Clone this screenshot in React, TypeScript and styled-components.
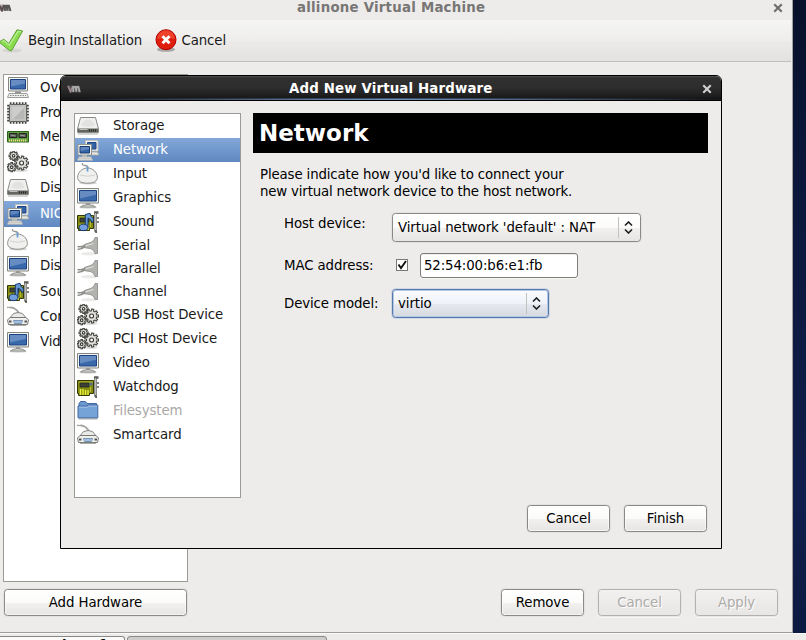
import React from 'react';
import styled, { createGlobalStyle, css } from 'styled-components';

const GlobalStyle = createGlobalStyle`
  * { box-sizing: border-box; }
  html, body { margin: 0; padding: 0; overflow: hidden; }
  body {
    background: #edeceb;
    color: #1a1a1a;
    font-family: 'DejaVu Sans', sans-serif;
    font-size: 13.33px;
    letter-spacing: -0.11px;
    cursor: default;
  }
`;

const Screen = styled.div`
  position: relative;
  width: 806px;
  height: 640px;
  overflow: hidden;
  display: flex;
  flex-direction: column;
  background: #edeceb;
`;

const Desktop = styled.div`
  height: 633px;
  flex: none;
  display: flex;
  background: linear-gradient(#081129 0, #0a1536 110px, #101e4c 500px, #0c1a42 633px);
`;

const MainWindow = styled.div`
  width: 793px;
  height: 633px;
  display: flex;
  flex-direction: column;
  background: #edeceb;
  border-right: 1px solid #a3a2a0;
  border-bottom: 1px solid #9d9c9a;
`;

const MainTitle = styled.div`
  height: 20px;
  flex: none;
  display: flex;
  align-items: center;
  padding: 0 9px 4px 0;
  color: #777674;
  font-weight: bold;
`;

const TitleText = styled.span<{ $left: number; $spacing: string }>`
  margin-left: ${p => p.$left}px;
  flex: 1;
  white-space: nowrap;
  line-height: 16px;
  letter-spacing: ${p => p.$spacing};
`;

const Toolbar = styled.div`
  height: 42px;
  width: 791px;
  flex: none;
  display: flex;
  align-items: center;
  background: linear-gradient(#f5f5f3 0, #eeedec 21px, #ebeae9 22px, #e3e2e0 41px);
  border-bottom: 1px solid #c0bfbd;
`;

const ToolItem = styled.div<{ $gap: number }>`
  display: flex;
  align-items: center;
  gap: ${p => p.$gap}px;
  margin-right: 12.5px;
  white-space: nowrap;
  svg { flex: none; }
`;

const MainBody = styled.div`
  flex: 1;
  padding: 12px 14px 0 3px;
  display: flex;
  flex-direction: column;
`;

const ListBox = styled.div<{ $w: number; $h: number }>`
  width: ${p => p.$w}px;
  height: ${p => p.$h}px;
  flex: none;
  border: 1px solid #9c9a97;
  background: #fff;
  overflow: hidden;
`;

const Row = styled.div<{ $h: number; $indent: number; $selected?: boolean; $dim?: boolean }>`
  height: ${p => p.$h}px;
  padding-left: ${p => p.$indent}px;
  display: flex;
  align-items: center;
  gap: ${p => (p.$indent === 3 ? 11 : 14)}px;
  white-space: nowrap;
  color: ${p => (p.$dim ? '#aaa8a5' : '#1a1a1a')};
  ${p =>
    p.$selected &&
    css`
      color: #fff;
      background: linear-gradient(#83a7d9, #6089c1);
    `}
  svg { flex: none; }
`;

const RowLabel = styled.span`
  line-height: 16px;
`;

const ActionBar = styled.div`
  display: flex;
  margin: 7px 0 0 1px;
  gap: 14px;
`;

const Spacer = styled.div`
  flex: 1;
`;

const Button = styled.button<{ $w?: number }>`
  width: ${p => p.$w ?? 83}px;
  height: 27px;
  padding: 0 0 1px;
  font: inherit;
  letter-spacing: -0.08px;
  color: #000;
  border: 1px solid #8b8986;
  border-radius: 3.5px;
  background: linear-gradient(#fff 0, #fbfbfa 50%, #f2f1f0 52%, #e6e5e3 100%);
  box-shadow: 0 0 0 1px #e3e2e0, inset 0 0 0 1px rgba(255, 255, 255, 0.6);
  &:disabled {
    color: #adaba8;
    text-shadow: 1px 1px #fff;
    border-color: #b3b1ae;
    background: linear-gradient(#f2f1f0, #e7e6e4);
    box-shadow: 0 0 0 1px #e8e7e5, 0 1px 0 1px #f6f6f5;
  }
`;

const Taskbar = styled.div`
  height: 7px;
  display: flex;
  gap: 2px;
  padding-top: 2px;
  border-top: 1px solid #fbfbfa;
`;

const TaskButton = styled.div<{ $w: number; $active?: boolean }>`
  width: ${p => p.$w}px;
  height: 30px;
  padding: 1px 0 0 62px;
  border: 1px solid #8b8986;
  border-left-width: ${p => (p.$active ? 1 : 0)}px;
  border-radius: ${p => (p.$active ? '3px 3px 0 0' : '0 3px 0 0')};
  background: ${p => (p.$active ? '#cfcdcb' : '#fafaf9')};
  color: #000;
  font-weight: bold;
  line-height: 16px;
  white-space: nowrap;
`;

const Dialog = styled.div`
  position: absolute;
  left: 60px;
  top: 75px;
  width: 662px;
  height: 474px;
  border: 1px solid #000;
  border-radius: 6px 6px 0 0;
  background: #edeceb;
  overflow: hidden;
  display: flex;
  flex-direction: column;
`;

const DialogTitle = styled.div`
  height: 25px;
  flex: none;
  display: flex;
  align-items: center;
  padding: 2px 9px 0 6px;
  color: #fff;
  font-weight: bold;
  border-bottom: 1px solid #000;
  background:
    linear-gradient(90deg, #191919 0, #7593be 50%, #191919 100%) 0 23px / 100% 1px no-repeat,
    linear-gradient(90deg, #101317 0, #3f5471 50%, #101317 100%) 0 22px / 100% 1px no-repeat,
    linear-gradient(#5b5b5b 0, #373737 1px, #303030 3px, #2d2d2d 12px, #191919 22px, #111 24px);
`;

const DialogBody = styled.div`
  flex: 1;
  display: flex;
  gap: 12px;
  padding: 12px 13px 0;
`;

const Panel = styled.div`
  width: 455px;
  display: flex;
  flex-direction: column;
`;

const Heading = styled.h1`
  margin: 0;
  height: 40px;
  padding: 0 0 0 6px;
  line-height: 41px;
  background: #000;
  color: #fff;
  font-size: 23px;
  font-weight: bold;
  letter-spacing: 0;
`;

const Hint = styled.p`
  margin: 13px 0 0 7px;
  line-height: 17px;
  color: #000;
  white-space: pre;
`;

const HintLine = styled.span<{ $spacing: string }>`
  display: block;
  letter-spacing: ${p => p.$spacing};
`;

const Form = styled.div`
  margin: 13px 0 0 31px;
  display: grid;
  grid-template-columns: 108px auto;
  grid-template-rows: 29px 47px 29px;
  align-items: center;
  justify-items: start;
  color: #000;
`;

const FieldLabel = styled.label<{ $raise?: number }>`
  line-height: 16px;
  padding-bottom: ${p => p.$raise ?? 0}px;
`;

const Combo = styled.div<{ $w: number; $focus?: boolean }>`
  width: ${p => p.$w}px;
  height: 29px;
  display: flex;
  align-items: center;
  padding: 0 6px 1px 5px;
  border: 1px solid ${p => (p.$focus ? '#5679ab' : '#8b8986')};
  border-radius: 3.5px;
  background: ${p =>
    p.$focus
      ? 'linear-gradient(#fafcfe 0, #eff2f8 50%, #e5e9ef 52%, #d6dae0 100%)'
      : 'linear-gradient(#fff 0, #fbfbfa 50%, #f2f1f0 52%, #e6e5e3 100%)'};
  box-shadow: ${p =>
    p.$focus ? '0 0 0 1px #d0d8e4, inset 0 0 0 1px #b4c8e6' : '0 0 0 1px #e3e2e0'};
`;

const ComboValue = styled.span`
  flex: 1;
  white-space: nowrap;
  letter-spacing: -0.08px;
`;

const ComboArrow = styled.span`
  width: 16px;
  height: 21px;
  display: flex;
  align-items: center;
  justify-content: flex-end;
  padding-right: 1px;
  border-left: 1px solid #c2c0bd;
  margin-top: 1px;
`;

const MacField = styled.div`
  display: flex;
  align-items: center;
  gap: 12px;
  padding-left: 4px;
`;

const Check = styled.span`
  width: 12px;
  height: 12px;
  display: flex;
  border: 1px solid #7b7976;
  background: #fff;
  margin-bottom: 1px;
  svg { overflow: visible; }
`;

const Entry = styled.div`
  width: 158px;
  height: 25px;
  padding: 0 3px 1px;
  display: flex;
  align-items: center;
  border: 1px solid #7e7c79;
  border-radius: 3px;
  background: #fff;
  box-shadow: inset 0 1px #eeedec, 0 1px #f7f7f6;
`;

const DialogActions = styled.div`
  display: flex;
  justify-content: flex-end;
  gap: 14px;
  margin: auto 1px 16px 0;
`;

const CloseIcon = ({ color }: { color: string }) => (
  <svg width="10" height="10" viewBox="0 0 10 10">
    <path d="M2 2l6 6M8 2l-6 6" stroke={color} strokeWidth="2.1" strokeLinecap="square" />
  </svg>
);

const VmMark = ({ dark }: { dark?: boolean }) => (
  <svg width="14" height="8" viewBox="0 0 14 8">
    <path d={dark ? 'M.5 .5h12l1.500 7H3z' : 'M0 .5h9.500l2 6.500H0z'} fill={dark ? '#4d4a4b' : '#a5a2a1'} />
    <path d={dark ? 'M1 1l2.500 5.500L6 1' : 'M0 2l2 4.500L4 1'} fill="none" stroke={dark ? '#9a868c' : '#58474d'} strokeWidth="1.8" />
    <path d={dark ? 'M6.200 7V2h2l1.200 4.500V2h2L12.700 7' : 'M5 7V2h1.500l1 4.500V2h1.500l1.500 5'} fill="none" stroke={dark ? '#a8a8a8' : '#555'} strokeWidth="1.8" />
  </svg>
);

const ArrowsIcon = () => (
  <svg width="9" height="13" viewBox="0 0 9 13">
    <path d="M1 4.500L4.500 1 8 4.500M1 8.500L4.500 12 8 8.500" fill="none" stroke="#1d1d1d" strokeWidth="1.600" />
  </svg>
);

const CheckIcon = () => (
  <svg width="24" height="26" viewBox="0 0 24 26">
    <ellipse cx="12" cy="22.500" rx="10" ry="2" fill="#d6d5d3" />
    <path d="M-1 14l4.800-2.700 5 4.200L17 1.800l5.600 1.200L11.500 22.800 9.500 22.500z" fill="#8adb50" stroke="#5aa332" strokeLinejoin="round" />
    <path d="M1.800 13.500l2-.9 5.300 4.600L18.200 3.500l2.800.4" fill="none" stroke="#bdf094" strokeWidth="1.200" />
  </svg>
);

const StopIcon = () => (
  <svg width="22" height="23" viewBox="0 0 22 23">
    <ellipse cx="11" cy="20.500" rx="9" ry="2.300" fill="#aaa8a6" />
    <circle cx="11" cy="10.700" r="10" fill="#df1e0c" stroke="#b00000" />
    <path d="M2.300 10a8.700 8.700 0 0 1 17.400 0q-8-3-17.400 0z" fill="#f4513c" opacity=".7" />
    <path d="M7.500 7.200l7 7M14.500 7.200l-7 7" stroke="#fff" strokeWidth="3" />
  </svg>
);

type Kind =
  | 'computer' | 'cpu' | 'memory' | 'gears' | 'disk' | 'network' | 'mouse'
  | 'display' | 'sound' | 'plug' | 'card' | 'folder' | 'reader';

// Outline of a toothed wheel: each tooth adds two outer and two inner points.
const gearPoints = (x: number, y: number, r: number, teeth: number) => {
  const step = (2 * Math.PI) / teeth;
  const offsets: [number, number][] = [[-0.3, r * 0.74], [-0.22, r], [0.22, r], [0.3, r * 0.74]];
  return Array.from({ length: teeth }, (_, i) =>
    offsets
      .map(([o, d]) => {
        const a = step * (i + o);
        return `${(x + d * Math.cos(a)).toFixed(2)},${(y + d * Math.sin(a)).toFixed(2)}`;
      })
      .join(' '),
  ).join(' ');
};

const Gear = ({ x, y, r, teeth }: { x: number; y: number; r: number; teeth: number }) => (
  <g>
    <polygon points={gearPoints(x, y, r, teeth)} fill="#e2e1de" stroke="#454743" strokeWidth="1.100" />
    <circle cx={x} cy={y} r={r * 0.28} fill="#fff" stroke="#333532" strokeWidth="1.100" />
  </g>
);

const Board = () => (
  <g>
    <path d="M.5 4.500h16v13h-4v2H1.500v-2h-1z" fill="#848c12" stroke="#343806" />
    <path d="M3.500 13v6M6 13v6M8.500 14v5M11 14v5" stroke="#e8f03a" strokeWidth="1.400" />
    <path d="M2 6h14M13.500 11v5" stroke="#b4bc2a" />
    <path d="M3 7h9v4H3z" fill="#3b4038" stroke="#20241e" strokeWidth=".7" />
    <path d="M12.500 6.800h3v2.500h-3z" fill="#526d91" />
    <path d="M17 1.500h4.500M18.500 1.500v18q0 1.500 1.500 1.500" fill="none" stroke="#5c5e5a" strokeWidth="2.400" />
    <path d="M18.400 2v17" stroke="#d0d1ce" strokeWidth=".9" />
    <path d="M20 7h2M20 11h2" stroke="#595b57" strokeWidth="1.600" />
  </g>
);

const Monitor = () => (
  <g>
    <path d="M.5 1.500h21v14.500H.5z" fill="#f4f4f2" stroke="#82847f" />
    <path d="M2.500 3.500h17v10.500h-17z" fill="#3a69ab" stroke="#1c4380" />
    <path d="M3 4h16v3.800L3 11.500z" fill="#8baad4" opacity=".55" />
  </g>
);

const DeviceIcon = ({ kind }: { kind: Kind }) => (
  <svg width="22" height="22" viewBox="0 0 22 22">
    {kind === 'computer' && (
      <g>
        <path d="M1.500.5h19v13.500h-19z" fill="#f4f4f2" stroke="#82847f" />
        <path d="M3.500 2.500h15v9.500h-15z" fill="#3a69ab" stroke="#1c4380" />
        <path d="M4 3h14v3.500L4 9.500z" fill="#8baad4" opacity=".55" />
        <path d="M8 14.500h6v2H8z" fill="#8e908b" />
        <path d="M2 16.500h18l1.500 4H.5z" fill="#eeeeec" stroke="#9a9c97" />
        <path d="M3 18.500h16" stroke="#888a85" strokeDasharray="1.500 1" />
      </g>
    )}
    {kind === 'display' && (
      <g>
        <ellipse cx="11" cy="20.500" rx="9" ry="1.500" fill="#e2e2e0" />
        <path d="M9 16h4v2H9z" fill="#b1b3ae" />
        <path d="M3.500 20q2-2.300 7.500-2.300t7.500 2.300z" fill="#e6e6e4" stroke="#82847f" />
        <Monitor />
      </g>
    )}
    {kind === 'network' && (
      <g>
        <path d="M8.500 1.500h12.500V12H8.500z" fill="#f4f4f2" stroke="#bfc1bd" />
        <path d="M10.500 3.500h8.500v6.500h-8.500z" fill="#3465a8" stroke="#1c4380" />
        <path d="M13 13h7.500l1.500 3H14z" fill="#e8e8e5" stroke="#a6a8a3" strokeWidth=".8" />
        <path d="M1 5.500h13.500V16H1z" fill="#f4f4f2" stroke="#93958f" />
        <path d="M3 7.500h9.500V14H3z" fill="#3465a8" stroke="#16396f" />
        <path d="M3.500 8h8.500v2l-8.500 2z" fill="#8baad4" opacity=".5" />
        <path d="M5 16h5v2H5z" fill="#b9bbb6" />
        <path d="M2 18h12l1.500 3.200H.5z" fill="#f2f2f0" stroke="#b1b3ae" />
        <path d="M2.500 19.700H14" stroke="#8d8f8a" strokeDasharray="1 1" />
      </g>
    )}
    {kind === 'cpu' && (
      <g>
        <path d="M2.800 1.500h17M2.800 20.500h17M1.500 2.800v17M20.500 2.800v17" stroke="#3e403d" strokeWidth="2.600" strokeDasharray="1.700 1.300" />
        <rect x="2.500" y="2.500" width="17" height="17" rx="1" fill="#c2c3c0" stroke="#60625e" />
        <path d="M5 5h12v12H5z" fill="#cdcecb" />
        <path d="M17 6v11H6z" fill="#a8aaa6" opacity=".6" />
      </g>
    )}
    {kind === 'memory' && (
      <g>
        <path d="M.5 5.500h21v10.500H.5z" fill="#5fa142" stroke="#2e611b" />
        <path d="M2.500 7.500h7.500v4H2.500zM12 7.500h7.500v4H12z" fill="#565b56" stroke="#222" />
        <path d="M3.500 9l5 1M13 9l5 1" stroke="#99a094" />
        <path d="M2 14.500h18" stroke="#efdf80" strokeWidth="2" strokeDasharray="1.200 .8" />
      </g>
    )}
    {kind === 'gears' && (
      <g>
        <ellipse cx="13" cy="19.500" rx="8" ry="1.500" fill="#dadad8" />
        <Gear x={14.600} y={12} r={7} teeth={9} />
        <Gear x={6.600} y={4.800} r={4.600} teeth={8} />
        <Gear x={4.700} y={16.200} r={4.600} teeth={8} />
      </g>
    )}
    {kind === 'disk' && (
      <g>
        <path d="M1 18.700h20" stroke="#aaa" strokeWidth="2.400" opacity=".5" />
        <path d="M3.500 2.500h15L21.500 14v3.500H.5V14z" fill="#f0f0ee" stroke="#888a85" strokeLinejoin="round" />
        <path d="M4 10.500q2-6 7-6t7 6q-7 2.500-14 0z" fill="#e2e3e0" />
        <path d="M1 13.500h20V17H1z" fill="#63655f" />
        <path d="M2.500 14.500h8" stroke="#bfc0bd" />
        <path d="M12 15.500h8" stroke="#252625" strokeWidth="1.800" strokeDasharray="1 1" />
      </g>
    )}
    {kind === 'mouse' && (
      <g>
        <ellipse cx="11" cy="20" rx="9" ry="1.500" fill="#cfcfcd" />
        <path d="M5.500 0q-.5 2.500 2.500 2.500t3 3" fill="none" stroke="#949691" strokeWidth="1.300" />
        <path d="M10.500 5c5.500 0 9.900 4.500 9.900 9.500 0 3.700-3.800 5.700-9.900 5.700S.6 18.200.6 14.500C.6 9.500 5 5 10.500 5z" fill="#f0f0ee" stroke="#8e908b" />
        <path d="M3 12q7.500 2.500 15 0" fill="none" stroke="#d3d4d1" />
        <path d="M10.500 3.500v5" stroke="#6c9fd4" strokeWidth="1.800" />
      </g>
    )}
    {kind === 'card' && <Board />}
    {kind === 'sound' && (
      <g>
        <Board />
        <path d="M8.300 15.800V3.500l4.700-1.200q.7 3.700 3.600 5.700-.3 2.800-1.700 4 .2-3.500-3.900-5v9.500" fill="#6898d4" stroke="#173a70" />
        <ellipse cx="6.500" cy="16.400" rx="4.400" ry="3.200" fill="#729fdb" stroke="#173a70" />
      </g>
    )}
    {kind === 'plug' && (
      <g>
        <ellipse cx="12" cy="18.800" rx="8" ry="1.700" fill="#ebebea" />
        <path d="M.5 14.500Q5 14 9 11M.5 11.500q5 1 9-1.700" fill="none" stroke="#8f918c" strokeWidth="1.700" />
        <path d="M7.500 9.500l6-2Q17.500 6 18 2.500h2.500v16H18q-.8-4-4.700-5l-5.300-.7z" fill="#b2b3ae" stroke="#868883" strokeWidth=".8" />
        <path d="M8.500 10.800l8-2.300" stroke="#e6e7e4" />
      </g>
    )}
    {kind === 'folder' && (
      <g>
        <path d="M1.500 18.700h19" stroke="#c4c4c4" strokeWidth="2" />
        <path d="M2 8V3.500L3.500 1.500H8.500L10 3.500H19.500v4.500z" fill="#6c9ad0" stroke="#41699f" />
        <path d="M1 6h9l1.500-1h9.300V17.800H1z" fill="#76a3d7" stroke="#41699f" strokeLinejoin="round" />
        <path d="M2 7.200h8.500l1.500-1h8" fill="none" stroke="#a3c2e8" />
      </g>
    )}
    {kind === 'reader' && (
      <g>
        <path d="M0 1.500q9-.5 12 6.500M3.500 1q7 1.500 9 7" fill="none" stroke="#a2a49f" strokeWidth="1.300" />
        <path d="M6.500 7.500q4.500-2 9 0l4.500 5.500H2z" fill="#eaeae8" stroke="#858782" />
        <path d="M3 11.500h16l2.500 2.500-1 4.500h-19L.5 14z" fill="#eeeeec" stroke="#797b76" strokeLinejoin="round" />
        <path d="M6.500 14.500h9l-1 3h-7z" fill="#84a8d2" stroke="#5f82aa" strokeWidth=".7" />
        <path d="M7.500 16h7" stroke="#fff" strokeDasharray="1 1" />
        <path d="M2 15.500h2.500M17.500 15.500H20" stroke="#555753" strokeWidth="1.800" />
        <path d="M3 19.500h16" stroke="#aaaba8" />
      </g>
    )}
  </svg>
);

interface Device {
  label: string;
  kind: Kind;
  h: number;
  selected?: boolean;
  dim?: boolean;
}

const installed: Device[] = [
  { label: 'Overview', kind: 'computer', h: 25 },
  { label: 'Processor', kind: 'cpu', h: 25 },
  { label: 'Memory', kind: 'memory', h: 24 },
  { label: 'Boot Options', kind: 'gears', h: 26 },
  { label: 'Disk 1', kind: 'disk', h: 26 },
  { label: 'NIC', kind: 'network', h: 26, selected: true },
  { label: 'Input', kind: 'mouse', h: 26 },
  { label: 'Display', kind: 'display', h: 26 },
  { label: 'Sound', kind: 'sound', h: 25 },
  { label: 'Console', kind: 'reader', h: 25 },
  { label: 'Video', kind: 'display', h: 25 },
];

const available: Device[] = [
  { label: 'Storage', kind: 'disk', h: 24 },
  { label: 'Network', kind: 'network', h: 24, selected: true },
  { label: 'Input', kind: 'mouse', h: 24 },
  { label: 'Graphics', kind: 'display', h: 24 },
  { label: 'Sound', kind: 'sound', h: 24 },
  { label: 'Serial', kind: 'plug', h: 23 },
  { label: 'Parallel', kind: 'plug', h: 23 },
  { label: 'Channel', kind: 'plug', h: 23 },
  { label: 'USB Host Device', kind: 'gears', h: 24 },
  { label: 'PCI Host Device', kind: 'gears', h: 24 },
  { label: 'Video', kind: 'display', h: 24 },
  { label: 'Watchdog', kind: 'card', h: 24 },
  { label: 'Filesystem', kind: 'folder', h: 24, dim: true },
  { label: 'Smartcard', kind: 'reader', h: 24 },
];

const DeviceRow = ({ device, indent }: { device: Device; indent: number }) => (
  <Row $h={device.h} $indent={indent} $selected={device.selected} $dim={device.dim}>
    <DeviceIcon kind={device.kind} />
    <RowLabel>{device.label}</RowLabel>
  </Row>
);

export default function App() {
  return (
    <>
      <GlobalStyle />
      <Screen>
        <Desktop>
          <MainWindow>
            <MainTitle>
              <VmMark />
              <TitleText $left={283} $spacing="0.24px">allinone Virtual Machine</TitleText>
              <CloseIcon color="#6e6d6b" />
            </MainTitle>
            <Toolbar>
              <ToolItem $gap={4}>
                <CheckIcon />
                Begin Installation
              </ToolItem>
              <ToolItem $gap={5}>
                <StopIcon />
                Cancel
              </ToolItem>
            </Toolbar>
            <MainBody>
              <ListBox $w={185} $h={508}>
                {installed.map((d, i) => (
                  <DeviceRow key={i} device={d} indent={3} />
                ))}
              </ListBox>
              <ActionBar>
                <Button $w={183}>Add Hardware</Button>
                <Spacer />
                <Button>Remove</Button>
                <Button disabled>Cancel</Button>
                <Button disabled>Apply</Button>
              </ActionBar>
            </MainBody>
          </MainWindow>
        </Desktop>
        <Taskbar>
          <TaskButton $w={125}>host f</TaskButton>
          <TaskButton $w={200} $active />
        </Taskbar>
        <Dialog>
          <DialogTitle>
            <VmMark dark />
            <TitleText $left={208} $spacing="0.16px">Add New Virtual Hardware</TitleText>
            <CloseIcon color="#d0d0d0" />
          </DialogTitle>
          <DialogBody>
            <ListBox $w={167} $h={385}>
              {available.map((d, i) => (
                <DeviceRow key={i} device={d} indent={2} />
              ))}
            </ListBox>
            <Panel>
              <Heading>Network</Heading>
              <Hint>
                <HintLine $spacing="-0.13px">Please indicate how you'd like to connect your</HintLine>
                <HintLine $spacing="-0.17px">new virtual network device to the host network.</HintLine>
              </Hint>
              <Form>
                <FieldLabel $raise={8}>Host device:</FieldLabel>
                <Combo $w={249}>
                  <ComboValue>Virtual network 'default' : NAT</ComboValue>
                  <ComboArrow><ArrowsIcon /></ComboArrow>
                </Combo>
                <FieldLabel>MAC address:</FieldLabel>
                <MacField>
                  <Check>
                    <svg width="10" height="10" viewBox="0 0 10 10">
                      <path d="M1.500 4.500l2.500 3.500L9 1" fill="none" stroke="#111" strokeWidth="1.900" />
                    </svg>
                  </Check>
                  <Entry>52:54:00:b6:e1:fb</Entry>
                </MacField>
                <FieldLabel>Device model:</FieldLabel>
                <Combo $w={157} $focus>
                  <ComboValue>virtio</ComboValue>
                  <ComboArrow><ArrowsIcon /></ComboArrow>
                </Combo>
              </Form>
              <DialogActions>
                <Button>Cancel</Button>
                <Button>Finish</Button>
              </DialogActions>
            </Panel>
          </DialogBody>
        </Dialog>
      </Screen>
    </>
  );
}
